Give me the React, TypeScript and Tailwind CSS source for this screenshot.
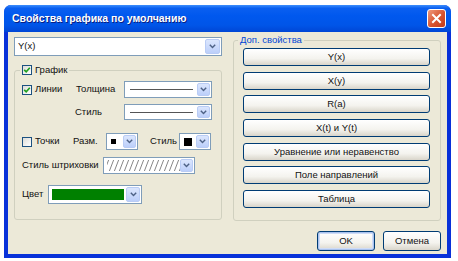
import React from "react";

const FONT = "font-['Liberation_Sans',Arial,sans-serif]";

const Arrow: React.FC = () => (
  <svg width="7" height="5" viewBox="0 0 7 5">
    <path d="M0.8 0.8 L3.5 3.5 L6.2 0.8" fill="none" stroke="#4d6185" strokeWidth="1.4" />
  </svg>
);

// выпадающий список в стиле XP
const Combo: React.FC<{ className?: string; children?: React.ReactNode; btn?: string }> = ({
  className = "",
  children,
  btn = "w-[13px]",
}) => (
  <div className={`flex border border-[#7f9db9] bg-white p-px ${className}`}>
    <div className="flex-1 flex items-center min-w-0">{children}</div>
    <div
      className={`${btn} flex items-center justify-center rounded-[2px] border border-[#b9ccf5] bg-[linear-gradient(180deg,#dbe6fd,#bccffa)]`}
    >
      <Arrow />
    </div>
  </div>
);

const Check: React.FC<{ checked?: boolean; label: string }> = ({ checked, label }) => (
  <div className="flex items-center gap-[3px]">
    <div className="w-[10px] h-[10px] border border-[#1c5180] bg-[linear-gradient(135deg,#dcdcd7,#ffffff)] flex items-center justify-center">
      {checked && (
        <svg width="8" height="8" viewBox="0 0 8 8">
          <path d="M1.2 3.8 L3.2 5.8 L6.8 1.8" fill="none" stroke="#21a121" strokeWidth="1.7" />
        </svg>
      )}
    </div>
    <span>{label}</span>
  </div>
);

const XpButton: React.FC<{ label: string; className?: string; focused?: boolean }> = ({
  label,
  className = "",
  focused,
}) => (
  <div
    className={`flex items-center justify-center rounded-[3px] border border-[#003c74] bg-[linear-gradient(180deg,#ffffff_0%,#f4f3ee_60%,#d9d5ca_100%)] ${
      focused ? "shadow-[inset_0_0_0_1px_#a9c2ee,inset_0_0_0_2px_#cfdcf6]" : ""
    } ${className}`}
  >
    {label}
  </div>
);

const Line: React.FC = () => <div className="mx-[4px] h-px flex-1 bg-[#555]" />;

const Hatch: React.FC = () => (
  <svg className="w-full h-full" preserveAspectRatio="none">
    <defs>
      <pattern id="hatch" width="5" height="13" patternUnits="userSpaceOnUse">
        <path d="M-1 13 L4 0 M4 13 L9 0" stroke="#666" strokeWidth="0.8" fill="none" />
      </pattern>
    </defs>
    <rect x="2" y="1" width="100%" height="11" fill="url(#hatch)" />
  </svg>
);

const App: React.FC = () => {
  const extra = [
    "Y(x)",
    "X(y)",
    "R(a)",
    "X(t) и Y(t)",
    "Уравнение или неравенство",
    "Поле направлений",
    "Таблица",
  ];

  return (
    <div className={`w-[458px] h-[261px] bg-white pl-[4px] pt-[5px] text-[9.5px] text-[#111] ${FONT}`}>
      <div className="w-[447px] h-[253px] flex flex-col rounded-t-[7px] bg-[#0831d9] overflow-hidden">
        {/* заголовок */}
        <div className="h-[27px] shrink-0 flex items-center pl-[8px] pr-[5px] bg-[linear-gradient(180deg,#3d8efc_0%,#0a5ff0_12%,#0058ee_40%,#0055e8_75%,#0046d5_100%)]">
          <span className="flex-1 text-white text-[10.5px] font-bold [text-shadow:1px_1px_0_#0a1e80]">
            Свойства графика по умолчанию
          </span>
          <div className="w-[19px] h-[19px] rounded-[3px] border border-white bg-[linear-gradient(135deg,#ee9a7d,#d8532f_55%,#c13b1a)] flex items-center justify-center">
            <svg width="11" height="11" viewBox="0 0 11 11">
              <path d="M2 2 L9 9 M9 2 L2 9" stroke="#fff" strokeWidth="2" strokeLinecap="square" />
            </svg>
          </div>
        </div>

        {/* тело */}
        <div className="flex-1 mx-[4px] mb-[4px] bg-[#ece9d8] flex flex-col">
          <div className="flex items-start pl-[6px] h-[189px]">
            <div className="w-[208px] mt-[5px]">
              <Combo className="h-[19px]" btn="w-[15px]">
                <span className="pl-[2px]">Y(x)</span>
              </Combo>

              <fieldset className="mt-[8px] h-[156px] border border-[#d0d0bf] rounded-[3px] px-[7px]">
                <legend className="ml-[-2px] px-[2px] h-[12px] leading-[12px]">
                  <Check checked label="График" />
                </legend>

                <div className="flex items-center mt-[5px] h-[17px]">
                  <div className="w-[54px]">
                    <Check checked label="Линии" />
                  </div>
                  <span className="w-[48px]">Толщина</span>
                  <Combo className="w-[88px] h-[17px]">
                    <Line />
                  </Combo>
                </div>

                <div className="flex items-center mt-[6px] h-[16px]">
                  <div className="w-[53px]" />
                  <span className="w-[49px]">Стиль</span>
                  <Combo className="w-[88px] h-[16px]">
                    <Line />
                  </Combo>
                </div>

                <div className="flex items-center mt-[13px] h-[17px]">
                  <div className="w-[51px]">
                    <Check label="Точки" />
                  </div>
                  <span className="w-[33px]">Разм.</span>
                  <Combo className="w-[32px] h-[17px]">
                    <div className="ml-[3px] w-[5px] h-[5px] bg-black" />
                  </Combo>
                  <div className="w-[12px]" />
                  <span className="w-[29px]">Стиль</span>
                  <Combo className="w-[32px] h-[17px]">
                    <div className="ml-[3px] w-[8px] h-[8px] bg-black" />
                  </Combo>
                </div>

                <div className="flex items-center mt-[7px] h-[17px]">
                  <span className="w-[81px]">Стиль штриховки</span>
                  <Combo className="w-[92px] h-[17px]">
                    <Hatch />
                  </Combo>
                </div>

                <div className="flex items-center mt-[11px] h-[19px]">
                  <span className="w-[26px]">Цвет</span>
                  <Combo className="w-[94px] h-[19px]" btn="w-[14px]">
                    <div className="mx-[2px] h-[11px] flex-1 bg-[#008000]" />
                  </Combo>
                </div>
              </fieldset>
            </div>

            <fieldset className="ml-[11px] mt-[2px] w-[208px] h-[187px] border border-[#d0d0bf] rounded-[3px]">
              <legend className="ml-[4px] px-[2px] h-[12px] leading-[12px] text-[#0046d5]">
                Доп. свойства
              </legend>
              <div className="flex flex-col gap-[5.7px] ml-[9px] mt-[2px]">
                {extra.map((t) => (
                  <XpButton key={t} label={t} className="w-[187px] h-[18px]" />
                ))}
              </div>
            </fieldset>
          </div>

          <div className="flex justify-end gap-[8px] pr-[6px] mt-[10px]">
            <XpButton label="OK" focused className="w-[58px] h-[20px]" />
            <XpButton label="Отмена" className="w-[58px] h-[20px]" />
          </div>
        </div>
      </div>
    </div>
  );
};

export default App;
